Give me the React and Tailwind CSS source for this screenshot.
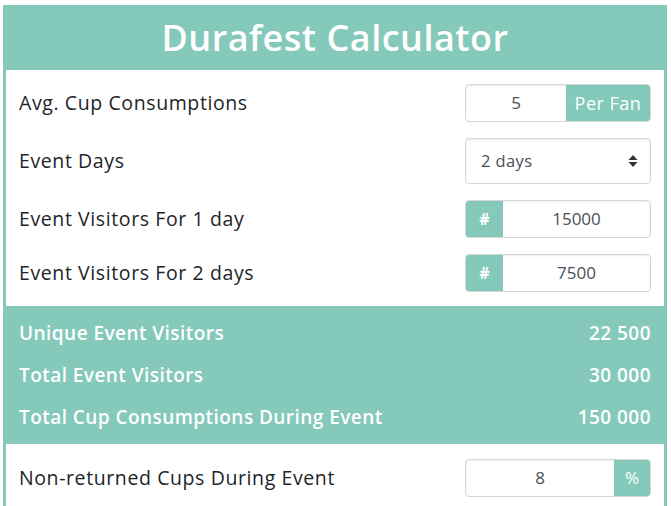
const font = { fontFamily: '"Open Sans", "Noto Sans", sans-serif' };

function Label({ children }) {
    return <span className="text-[19.5px] tracking-[0.6px] text-[#212529]">{children}</span>;
}

export default function App() {
    const results = [
        ['Unique Event Visitors', '22 500'],
        ['Total Event Visitors', '30 000'],
        ['Total Cup Consumptions During Event', '150 000'],
    ];

    return (
        <div className="min-h-[506px] bg-white pt-[5px] pl-[3px] overflow-hidden" style={font}>
            <div className="w-[664px] bg-[#84c9ba]">
                {/* Title */}
                <div className="h-[65px] flex items-center justify-center">
                    <h1 className="text-[36px] font-semibold text-white tracking-[0.5px]">Durafest Calculator</h1>
                </div>

                {/* Inputs */}
                <div className="mx-[3px] bg-white px-[13px] pt-[14px] pb-[14px] flex flex-col gap-[16px]">
                    <div className="flex items-center justify-between">
                        <Label>Avg. Cup Consumptions</Label>
                        <div className="flex w-[186px] h-[38px] rounded border border-[#d6d6d6] overflow-hidden shadow-[inset_0_1px_2px_rgba(0,0,0,0.08)]">
                            <div className="flex-1 flex items-center justify-center text-[17px] text-[#495057]">5</div>
                            <div className="w-[84px] bg-[#84c9ba] flex items-center justify-center text-[18px] tracking-[0.5px] text-white">Per Fan</div>
                        </div>
                    </div>
                    <div className="flex items-center justify-between">
                        <Label>Event Days</Label>
                        <div className="flex items-center justify-between w-[186px] h-[46px] rounded border border-[#d6d6d6] pl-[15px] pr-[12px] shadow-[inset_0_1px_2px_rgba(0,0,0,0.08)]">
                            <span className="text-[16.5px] tracking-[0.4px] text-[#495057]">2 days</span>
                            <svg width="10" height="14" viewBox="0 0 10 14" className="text-[#333]">
                                <path d="M5 1 L9.5 6 H0.5 Z" fill="currentColor" />
                                <path d="M5 13 L9.5 8 H0.5 Z" fill="currentColor" />
                            </svg>
                        </div>
                    </div>
                    {[['Event Visitors For 1 day', '15000'], ['Event Visitors For 2 days', '7500']].map(([label, value]) => (
                        <div key={label} className="flex items-center justify-between">
                            <Label>{label}</Label>
                            <div className="flex w-[186px] h-[38px] rounded border border-[#d6d6d6] overflow-hidden shadow-[inset_0_1px_2px_rgba(0,0,0,0.08)]">
                                <div className="w-[37px] bg-[#84c9ba] flex items-center justify-center text-[16px] font-bold text-white">#</div>
                                <div className="flex-1 flex items-center justify-center text-[17px] text-[#495057]">{value}</div>
                            </div>
                        </div>
                    ))}
                </div>

                {/* Results */}
                <div className="px-[16px] py-[6px]">
                    {results.map(([label, value]) => (
                        <div key={label} className="h-[42px] flex items-center justify-between text-[19px] tracking-[0.45px] font-semibold text-white">
                            <span>{label}</span>
                            <span>{value}</span>
                        </div>
                    ))}
                </div>

                {/* Non-returned */}
                <div className="mx-[3px] bg-white px-[13px] pt-[15px] pb-[20px]">
                    <div className="flex items-center justify-between">
                        <Label>Non-returned Cups During Event</Label>
                        <div className="flex w-[186px] h-[38px] rounded border border-[#d6d6d6] overflow-hidden shadow-[inset_0_1px_2px_rgba(0,0,0,0.08)]">
                            <div className="flex-1 flex items-center justify-center text-[17px] text-[#495057]">8</div>
                            <div className="w-[36px] bg-[#84c9ba] flex items-center justify-center text-[17px] text-white">%</div>
                        </div>
                    </div>
                </div>
            </div>
        </div>
    );
}
